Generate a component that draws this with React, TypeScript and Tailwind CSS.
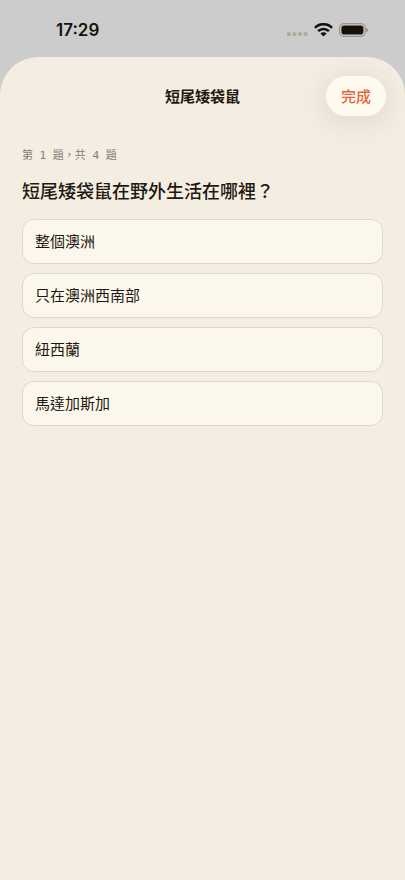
import { useState } from "react"

const quiz = {
  title: "短尾矮袋鼠",
  progress: "第 1 題，共 4 題",
  question: "短尾矮袋鼠在野外生活在哪裡？",
  options: ["整個澳洲", "只在澳洲西南部", "紐西蘭", "馬達加斯加"],
}

function StatusBar() {
  return (
    <div className="flex items-center justify-between pt-[18px] pb-[15px] pl-14 pr-9 text-[#15110a]">
      <span className="font-['Inter',sans-serif] text-[17px] leading-6 font-semibold">17:29</span>
      <div className="flex items-center gap-[6px]">
        <svg width="21" height="14" viewBox="0 0 21 14" fill="#b3a99d" aria-hidden="true">
          <rect x="0" y="9.3" width="3.8" height="3.6" rx="1.2" />
          <rect x="5.6" y="9.3" width="3.8" height="3.6" rx="1.2" />
          <rect x="11.2" y="9.3" width="3.8" height="3.6" rx="1.2" />
          <rect x="16.8" y="9.3" width="3.8" height="3.6" rx="1.2" />
        </svg>
        <svg width="19" height="14" viewBox="0 0 19 14" fill="none" stroke="currentColor" strokeWidth="2.6" aria-hidden="true">
          <path d="M1 4.8a12 12 0 0 1 17 0" />
          <path d="M4.1 8.2a7.6 7.6 0 0 1 10.8 0" />
          <path d="M9.5 13.5 6.4 10.6a4.4 4.4 0 0 1 6.2 0Z" fill="currentColor" stroke="none" />
        </svg>
        <svg width="30" height="14" viewBox="0 0 30 14" aria-hidden="true">
          <rect x="0.6" y="0.6" width="25.6" height="12.8" rx="4.4" fill="none" stroke="#9d948a" strokeWidth="1.2" />
          <rect x="2.4" y="2.4" width="22" height="9.2" rx="2.8" fill="currentColor" />
          <path d="M27.3 4.9v4.4c1.1-.3 1.6-1.2 1.6-2.2s-.5-1.9-1.6-2.2Z" fill="#8b8076" />
        </svg>
      </div>
    </div>
  )
}

export default function App() {
  const [selected, setSelected] = useState<string | null>(null)

  return (
    <div
      lang="zh-Hant"
      className="flex min-h-screen flex-col bg-[#cccccc] font-['Noto_Sans_CJK_TC',sans-serif] text-[#1f1811]"
    >
      <StatusBar />

      <main className="flex-1 overflow-hidden rounded-t-[38px] bg-[#f4ede2]">
        <header className="grid grid-cols-[1fr_auto_1fr] items-center px-[19px] pt-[19px]">
          <h1 className="col-start-2 text-[15px] leading-6 font-bold">{quiz.title}</h1>
          <button
            type="button"
            className="h-10 justify-self-end rounded-full bg-[#fffaf0] px-[15px] text-[15px] font-medium text-[#e2683a] shadow-[0_4px_28px_rgba(70,50,60,0.12)]"
          >
            完成
          </button>
        </header>

        <section className="px-[22px] pt-8">
          <p className="font-['DejaVu_Sans_Mono','Noto_Sans_CJK_TC',monospace] text-[11px] leading-4 text-[#877e74]">
            {quiz.progress}
          </p>
          <h2 className="mt-[14px] text-[18px] leading-6 font-medium">{quiz.question}</h2>

          <div className="mt-[17px] flex flex-col gap-[9px]">
            {quiz.options.map((option) => (
              <button
                key={option}
                type="button"
                aria-pressed={selected === option}
                onClick={() => setSelected(option)}
                className="h-[45px] rounded-xl border border-[#ded8cc] bg-[#fcf7ed] px-3 text-left text-[15px] aria-pressed:border-[#e2683a]"
              >
                {option}
              </button>
            ))}
          </div>
        </section>
      </main>
    </div>
  )
}
